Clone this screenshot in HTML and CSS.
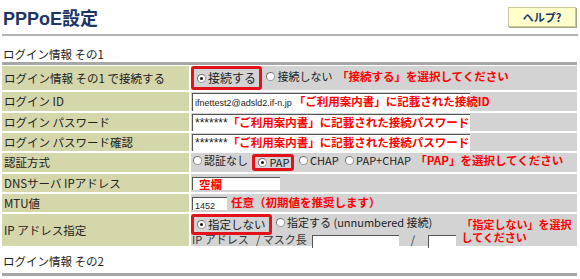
FILE: index.html
```html
<!DOCTYPE html>
<html lang="ja">
<head>
    <meta charset="UTF-8">
    <title>PPPoE設定</title>
    <link rel="stylesheet" href="styles.css">
</head>
<body>

    <!-- Header -->
    <div class="header">
        <h1>PPPoE設定</h1>
        <span class="help-btn">ヘルプ?</span>
    </div>
    <hr class="rule">

    <p class="section">ログイン情報 その1</p>
    <div class="bar"></div>

    <table class="form">
        <tr class="r1">
            <th>ログイン情報 その1 で接続する</th>
            <td>
                <span class="mark big"><span class="radio on"></span>接続する</span>
                <span class="opt"><span class="radio"></span>接続しない</span>
                <span class="note">「接続する」を選択してください</span>
            </td>
        </tr>
        <tr>
            <th>ログイン ID</th>
            <td><span class="field"><span class="val">ifnettest2@adsld2.if-n.jp</span><span class="note">「ご利用案内書」に記載された接続ID</span></span></td>
        </tr>
        <tr class="short">
            <th>ログイン パスワード</th>
            <td><span class="field"><span class="val pw">*******</span><span class="note">「ご利用案内書」に記載された接続パスワード</span></span></td>
        </tr>
        <tr class="short">
            <th>ログイン パスワード確認</th>
            <td><span class="field"><span class="val pw">*******</span><span class="note">「ご利用案内書」に記載された接続パスワード</span></span></td>
        </tr>
        <tr>
            <th>認証方式</th>
            <td>
                <span class="opt"><span class="radio"></span>認証なし</span>
                <span class="mark sm"><span class="radio on"></span>PAP</span>
                <span class="opt"><span class="radio"></span>CHAP</span>
                <span class="opt"><span class="radio"></span>PAP+CHAP</span>
                <span class="note">「PAP」を選択してください</span>
            </td>
        </tr>
        <tr class="short">
            <th>DNSサーバ IPアドレス</th>
            <td><span class="box dns"><span class="note">空欄</span></span></td>
        </tr>
        <tr class="short">
            <th>MTU値</th>
            <td><span class="box mtu"><span class="val">1452</span></span><span class="note">任意（初期値を推奨します）</span></td>
        </tr>
        <tr class="r8">
            <th>IP アドレス指定</th>
            <td>
                <div class="ipwrap">
                    <div class="iplines">
                        <div>
                            <span class="mark"><span class="radio on"></span>指定しない</span>
                            <span class="opt"><span class="radio"></span>指定する (unnumbered 接続)</span>
                        </div>
                        <div class="ipaddr">
                            IP アドレス &nbsp; / マスク長
                            <span class="box ip"></span>
                            <span class="slash">/</span>
                            <span class="box mask"></span>
                        </div>
                    </div>
                    <span class="note two">「指定しない」を選択<br>してください</span>
                </div>
            </td>
        </tr>
    </table>

    <p class="section second">ログイン情報 その2</p>
    <div class="bar"></div>

</body>
</html>
```

FILE: styles.css
```css
body {
    margin: 0;
    padding: 0 2px;
    background: #ffffff;
    font-family: "Noto Sans CJK JP", "Liberation Sans", sans-serif;
    font-size: 11px;
    color: #222;
}

/* Header */
.header {
    display: flex;
    justify-content: space-between;
    align-items: center;
    height: 34px;
    padding: 0 1px;
}

.header h1 {
    margin: 0;
    font-family: "Liberation Sans", "Noto Sans CJK JP", sans-serif;
    font-size: 18px;
    font-weight: bold;
    color: #1b3566;
}

.help-btn {
    width: 66px;
    height: 18px;
    line-height: 18px;
    text-align: center;
    background: #ffffcc;
    border: 1px solid #c8c89a;
    box-shadow: 1px 1px 0 #a8a888;
    font-weight: bold;
    font-size: 11px;
    color: #1b3566;
    margin-right: 1px;
}

.rule {
    margin: 0;
    border: none;
    border-top: 2px solid #b4b4b4;
}

.section {
    margin: 11px 0 0 1px;
    font-size: 11.5px;
    height: 15px;
    line-height: 15px;
}

.section.second {
    margin-top: 8px;
    margin-bottom: 4px;
}

.bar {
    width: 575px;
    height: 3px;
    background: #a6a6a6;
}

/* Form table */
.form {
    width: 575px;
    border-collapse: separate;
    border-spacing: 0 2px;
    margin-top: -1px;
    margin-bottom: -2px;
}

.form th {
    width: 185px;
    text-align: left;
    font-weight: normal;
    font-size: 11.5px;
    line-height: 13px;
    background: #d6d6ab;
    padding: 0 0 0 2px;
    height: 19px;
    border-right: 2px solid #fff;
    white-space: nowrap;
}

.form td {
    background: #d3d3d3;
    padding: 0;
    white-space: nowrap;
    line-height: 13px;
}

.form .short th, .form .short td {
    height: 18px;
}

.form .r1 th, .form .r1 td {
    height: 24px;
}

.form .r8 th, .form .r8 td {
    height: 32px;
    vertical-align: top;
}

.form .r8 th {
    vertical-align: middle;
}

/* Radios */
.radio {
    display: inline-block;
    width: 7px;
    height: 7px;
    border: 1px solid #9a9a9a;
    border-top-color: #777;
    border-left-color: #777;
    border-radius: 50%;
    background: #fff;
    margin: 0 2px 0 2px;
    position: relative;
}

.radio.on::after {
    content: "";
    position: absolute;
    left: 2px;
    top: 2px;
    width: 3px;
    height: 3px;
    border-radius: 50%;
    background: #111;
}

.opt {
    margin-right: 2px;
}

.mark {
    display: inline-block;
    border: 3px solid #e3111a;
    border-radius: 3px;
    padding: 0 3px 0 1px;
    line-height: 15px;
    font-size: 11.5px;
    vertical-align: middle;
}

.mark.big {
    line-height: 18px;
    font-size: 12px;
}

.mark.sm {
    padding-right: 2px;
    font-size: 11px;
    line-height: 11px;
}

/* Notes */
.note {
    color: #ff0000;
    font-weight: bold;
    font-size: 11.5px;
}

/* Fields */
.field {
    display: inline-block;
    width: 277px;
    background: #fff;
    border-top: 1px solid #555;
    border-left: 1px solid #555;
    line-height: 15px;
    margin-left: 1px;
    vertical-align: middle;
}

.val {
    font-family: "Liberation Sans", sans-serif;
    font-size: 9px;
    color: #222;
    padding: 0 2px;
}

.val.pw {
    font-size: 12px;
    padding-right: 0;
}

.box {
    display: inline-block;
    background: #fff;
    border-top: 1px solid #555;
    border-left: 1px solid #555;
    height: 12px;
    line-height: 12px;
    vertical-align: middle;
    margin-left: 1px;
}

.box.dns {
    width: 81px;
    padding-left: 6px;
}

.box.mtu {
    width: 34px;
    margin-right: 4px;
}

.box.ip {
    width: 86px;
    height: 12px;
    margin-left: 3px;
}

.box.mask {
    width: 27px;
    height: 12px;
}

.slash {
    margin: 0 9px;
}

.ipwrap {
    display: flex;
    align-items: flex-start;
    height: 32px;
}

.iplines {
    display: flex;
    flex-direction: column;
}

.ipaddr {
    color: #333;
    line-height: 11px;
    height: 11px;
    margin-top: -1px;
    padding-left: 1px;
}

.note.two {
    font-size: 11px;
    line-height: 13px;
    margin-left: 6px;
    margin-top: 4px;
}
```
